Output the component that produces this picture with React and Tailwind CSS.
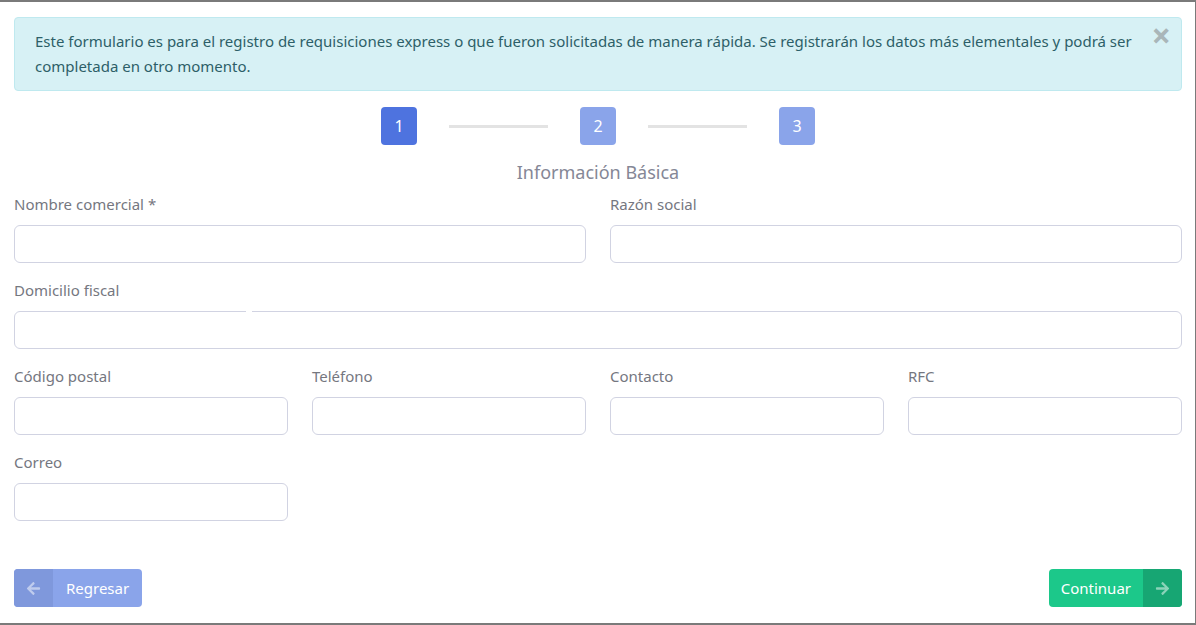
import { FaArrowLeft, FaArrowRight } from "react-icons/fa";

function Field({ label, className = "" }) {
    return (
        <div className={`flex flex-col ${className}`}>
            <label className="text-[15px] leading-[20px] text-[#75777f] mb-[11px]">{label}</label>
            <input
                type="text"
                className="h-[38px] w-full rounded-[6px] border border-[#d1d3e2] bg-white px-3 outline-none"
            />
        </div>
    );
}

export default function App() {
    return (
        <div
            className="w-[1196px] h-[625px] bg-white border-t-2 border-b-2 border-r border-[#7a7a7a] pl-[14px] pr-[13px] pt-[15px] flex flex-col"
            style={{ fontFamily: '"Noto Sans", sans-serif' }}
        >
            <div className="relative rounded-[4px] border border-[#bfe9ef] bg-[#d7f1f5] pl-[20px] pr-[34px] pt-[11px] pb-[11px] text-[15px] leading-[25px] text-[#2d5f68]">
                Este formulario es para el registro de requisiciones express o que fueron solicitadas de manera rápida. Se registrarán los datos más elementales y podrá ser completada en otro momento.
                <button className="absolute right-[10px] top-[0px] text-[34px] font-bold leading-[34px] text-[#a9b6b9]">×</button>
            </div>

            <div className="mt-[16px] flex items-center justify-center">
                <div className="flex h-[38px] w-[36px] items-center justify-center rounded-[4px] bg-[#4e73df] text-[16px] text-white">1</div>
                <div className="mx-[32px] h-[3px] w-[99px] bg-[#e3e3e3]" />
                <div className="flex h-[38px] w-[36px] items-center justify-center rounded-[4px] bg-[#8aa4ea] text-[16px] text-white">2</div>
                <div className="mx-[32px] h-[3px] w-[99px] bg-[#e3e3e3]" />
                <div className="flex h-[38px] w-[36px] items-center justify-center rounded-[4px] bg-[#8aa4ea] text-[16px] text-white">3</div>
            </div>

            <h3 className="mt-[15px] text-center text-[18px] leading-[24px] text-[#858796]">Información Básica</h3>

            <div className="mt-[10px] grid grid-cols-2 gap-x-[24px]">
                <Field label="Nombre comercial *" />
                <Field label="Razón social" />
            </div>
            <div className="relative mt-[17px]">
                <Field label="Domicilio fiscal" />
                <span className="absolute left-[232px] top-[30px] h-[3px] w-[6px] bg-white" />
            </div>
            <div className="mt-[17px] grid grid-cols-4 gap-x-[24px]">
                <Field label="Código postal" />
                <Field label="Teléfono" />
                <Field label="Contacto" />
                <Field label="RFC" />
            </div>
            <div className="mt-[17px] grid grid-cols-4 gap-x-[24px]">
                <Field label="Correo" />
            </div>

            <div className="mt-[48px] flex justify-between">
                <button className="flex h-[38px] items-stretch overflow-hidden rounded-[4px] bg-[#8aa4ea] text-[15px] text-white">
                    <span className="flex w-[39px] items-center justify-center bg-[#7f98dc]">
                        <FaArrowLeft className="text-[15px] text-white/50" />
                    </span>
                    <span className="flex items-center px-[13px]">Regresar</span>
                </button>
                <button className="flex h-[38px] items-stretch overflow-hidden rounded-[4px] bg-[#1cc88a] text-[15px] text-white">
                    <span className="flex items-center px-[12px]">Continuar</span>
                    <span className="flex w-[39px] items-center justify-center bg-[#17a673]">
                        <FaArrowRight className="text-[15px] text-white/50" />
                    </span>
                </button>
            </div>
        </div>
    );
}
